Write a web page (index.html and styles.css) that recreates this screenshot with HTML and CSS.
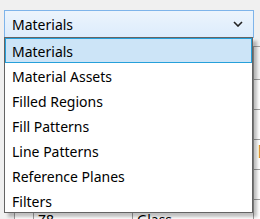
FILE: index.html
```html
<!DOCTYPE html>
<html lang="en">
<head>
  <meta charset="UTF-8">
  <title>Materials</title>
  <link rel="stylesheet" href="styles.css">
</head>
<body>
  <div class="combo">
    <span>Materials</span>
    <svg class="chevron" width="10" height="6" viewBox="0 0 10 6"><path d="M1 1 L5 5 L9 1" fill="none" stroke="#222" stroke-width="1.6"/></svg>
  </div>

  <table class="grid">
    <tr class="head"><td></td><td></td><td></td><td></td></tr>
    <tr><td></td><td></td><td></td><td></td></tr>
    <tr><td></td><td></td><td></td><td></td></tr>
    <tr class="mid"><td></td><td></td><td></td><td><span class="mark">[</span></td></tr>
    <tr><td></td><td></td><td></td><td></td></tr>
    <tr><td></td><td>Z8</td><td>Glass</td><td></td></tr>
  </table>

  <ul class="dropdown">
    <li class="selected">Materials</li>
    <li>Material Assets</li>
    <li>Filled Regions</li>
    <li>Fill Patterns</li>
    <li>Line Patterns</li>
    <li>Reference Planes</li>
    <li>Filters</li>
  </ul>
</body>
</html>
```

FILE: styles.css
```css
html, body {
  height: 219px;
  overflow: hidden;
}
body {
  margin: 0;
  background: #f0f0f0;
  font-family: "Noto Sans", "Open Sans", sans-serif;
  font-size: 14px;
  color: #000;
  position: relative;
}
.combo {
  margin: 10px 6px 0 4px;
  height: 25px;
  border: 1px solid #7eb4ea;
  background: linear-gradient(#ecf4fc, #dcecfc);
  display: flex;
  align-items: center;
  justify-content: space-between;
  padding: 1px 10px 0 7px;
  box-sizing: content-box;
}
.chevron {
  display: block;
  margin-top: -1px;
}
.grid {
  border-collapse: collapse;
  table-layout: fixed;
  width: 300px;
  margin: 8px 0 0 14px;
  background: #fff;
}
.grid td {
  border: 1px solid #a0a0a0;
  height: 29px;
  padding: 0 4px;
  font-size: 14px;
  vertical-align: bottom;
  white-space: nowrap;
  overflow: hidden;
}
.grid .head td {
  height: 32px;
  background: #f4f4f4;
}
.grid .mid td {
  vertical-align: top;
}
.grid td:nth-child(1) { width: 10px; }
.grid td:nth-child(2) { width: 90px; }
.grid td:nth-child(3) { width: 112px; }
.grid td:nth-child(4) { width: 52px; }
.mark {
  color: #d08020;
}
.dropdown {
  position: absolute;
  left: 4px;
  top: 37px;
  width: 247px;
  height: 174px;
  margin: 0;
  padding: 0;
  list-style: none;
  background: #fff;
  border: 1px solid #646464;
  box-shadow: 4px 4px 3px rgba(0, 0, 0, 0.25);
}
.dropdown li {
  height: 25px;
  line-height: 23px;
  padding: 2px 0 0 7px;
  box-sizing: border-box;
}
.dropdown li.selected {
  background: #cce4f7;
  border: 1px solid #26a0da;
  line-height: 21px;
  padding: 2px 0 0 6px;
}
```
